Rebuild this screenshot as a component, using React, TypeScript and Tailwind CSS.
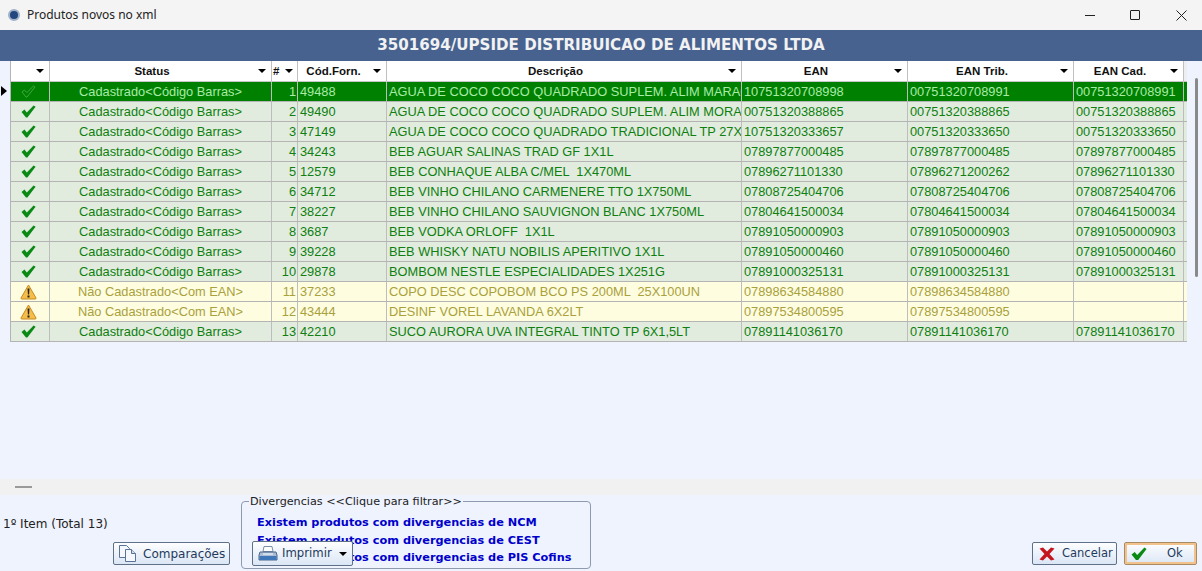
import React from 'react';

type Row = {
  status: string;
  num: number;
  cod: string;
  desc: string;
  ean: string;
  trib: string;
  cad: string;
  warn?: boolean;
};

const CAD = 'Cadastrado<Código Barras>';
const NAO = 'Não Cadastrado<Com EAN>';

const rows: Row[] = [
  { status: CAD, num: 1, cod: '49488', desc: 'AGUA DE COCO COCO QUADRADO SUPLEM. ALIM MARACUJA', ean: '10751320708998', trib: '00751320708991', cad: '00751320708991' },
  { status: CAD, num: 2, cod: '49490', desc: 'AGUA DE COCO COCO QUADRADO SUPLEM. ALIM MORANGO', ean: '00751320388865', trib: '00751320388865', cad: '00751320388865' },
  { status: CAD, num: 3, cod: '47149', desc: 'AGUA DE COCO COCO QUADRADO TRADICIONAL TP 27X200ML', ean: '10751320333657', trib: '00751320333650', cad: '00751320333650' },
  { status: CAD, num: 4, cod: '34243', desc: 'BEB AGUAR SALINAS TRAD GF 1X1L', ean: '07897877000485', trib: '07897877000485', cad: '07897877000485' },
  { status: CAD, num: 5, cod: '12579', desc: 'BEB CONHAQUE ALBA C/MEL  1X470ML', ean: '07896271101330', trib: '07896271200262', cad: '07896271101330' },
  { status: CAD, num: 6, cod: '34712', desc: 'BEB VINHO CHILANO CARMENERE TTO 1X750ML', ean: '07808725404706', trib: '07808725404706', cad: '07808725404706' },
  { status: CAD, num: 7, cod: '38227', desc: 'BEB VINHO CHILANO SAUVIGNON BLANC 1X750ML', ean: '07804641500034', trib: '07804641500034', cad: '07804641500034' },
  { status: CAD, num: 8, cod: '3687', desc: 'BEB VODKA ORLOFF  1X1L', ean: '07891050000903', trib: '07891050000903', cad: '07891050000903' },
  { status: CAD, num: 9, cod: '39228', desc: 'BEB WHISKY NATU NOBILIS APERITIVO 1X1L', ean: '07891050000460', trib: '07891050000460', cad: '07891050000460' },
  { status: CAD, num: 10, cod: '29878', desc: 'BOMBOM NESTLE ESPECIALIDADES 1X251G', ean: '07891000325131', trib: '07891000325131', cad: '07891000325131' },
  { status: NAO, num: 11, cod: '37233', desc: 'COPO DESC COPOBOM BCO PS 200ML  25X100UN', ean: '07898634584880', trib: '07898634584880', cad: '', warn: true },
  { status: NAO, num: 12, cod: '43444', desc: 'DESINF VOREL LAVANDA 6X2LT', ean: '07897534800595', trib: '07897534800595', cad: '', warn: true },
  { status: CAD, num: 13, cod: '42210', desc: 'SUCO AURORA UVA INTEGRAL TINTO TP 6X1,5LT', ean: '07891141036170', trib: '07891141036170', cad: '07891141036170' },
];

const cols = 'grid grid-cols-[39px_222px_26px_89px_355px_166px_166px_110px_3px]';

const Caret = ({ right }: { right: string }) => (
  <span className={`absolute top-[8px] h-0 w-0 border-x-[4px] border-t-[4px] border-x-transparent border-t-black ${right}`} />
);

const HeadCell = ({ label }: { label?: string }) => (
  <div className="relative flex items-center justify-center border-r border-[#c0c0c0] pr-[17px] pt-px text-[11.5px] font-bold text-[#111]">
    {label}
    <Caret right="right-[5px]" />
  </div>
);

const CheckMark = ({ selected, size = 15 }: { selected?: boolean; size?: number }) => (
  <svg width={size} height={size * 0.87} viewBox="0 0 15 13">
    {selected ? (
      <path d="M1 7 L3.5 5 L5.8 7.6 L12.5 1 L14 2 L6 12 L5 12 Z" fill="none" stroke="#3fa83f" strokeWidth="1" />
    ) : (
      <path d="M0.5 7 L3.5 4.6 L5.8 7.4 L12.6 0.5 L14.6 1.8 L6.4 12.6 L5 12.6 Z" fill="#0a8a14" />
    )}
  </svg>
);

const WarnIcon = () => (
  <svg width="17" height="16" viewBox="0 0 17 16">
    <path d="M8.5 1 L16 14 Q16.3 15 15 15 L2 15 Q0.7 15 1 14 Z" fill="#f5be4a" stroke="#c98a22" strokeWidth="1" />
    <path d="M7.5 4.5h2l-.4 6h-1.2z" fill="#222" />
    <rect x="7.5" y="11.5" width="2" height="2" fill="#222" />
  </svg>
);

const GridRow = ({ row, selected }: { row: Row; selected: boolean }) => {
  const tone = selected ? 'bg-[#008000] text-[#a8eca8]' : row.warn ? 'bg-[#fffde0] text-[#a9a13c]' : 'bg-[#e1ecdf] text-[#0f7f0f]';
  const cell = 'flex items-center overflow-hidden whitespace-pre border-r border-[#bdbdbd] pl-[2px]';
  return (
    <div className={`${cols} h-[20px] border-b border-[#b4b4b4] text-[12.8px] ${tone}`}>
      <div className="flex items-center justify-center border-r border-[#bdbdbd] pr-[3px]">
        {row.warn ? <WarnIcon /> : <CheckMark selected={selected} />}
      </div>
      <div className="flex items-center justify-center border-r border-[#bdbdbd]">{row.status}</div>
      <div className="flex items-center justify-end border-r border-[#bdbdbd] pr-[1px]">{row.num}</div>
      <div className={cell}>{row.cod}</div>
      <div className={cell}>{row.desc}</div>
      <div className={cell}>{row.ean}</div>
      <div className={cell}>{row.trib}</div>
      <div className={cell}>{row.cad}</div>
      <div />
    </div>
  );
};

const CopyIcon = () => (
  <svg width="20" height="19" viewBox="0 0 20 19" fill="#f4f7fb" stroke="#5a7396" strokeWidth="1">
    <path d="M1.5 1.5h7l3 3v9h-10z" />
    <path d="M7.5 5.5h6l4 4v8h-10z" />
    <path d="M13.5 5.5v4h4" fill="#cfdcec" />
  </svg>
);

const PrinterIcon = () => (
  <svg width="20" height="18" viewBox="0 0 20 18">
    <path d="M6 1.5h8l1 5H5z" fill="#fff" stroke="#7a8ea8" />
    <path d="M2 7h16l1 3v5H1v-5z" fill="#a9bcd4" stroke="#4a6489" />
    <path d="M1.5 11h17v4h-17z" fill="#3f77b8" />
    <path d="M5 9h10" stroke="#eef3fa" strokeWidth="1.2" />
  </svg>
);

const CancelIcon = () => (
  <svg width="16" height="14" viewBox="0 0 16 14">
    <path d="M0.5 1.5 L4 0.5 L8 4.5 L12 0.5 L15.5 1.5 L10.5 7 L15.5 12.5 L12 13.5 L8 9.5 L4 13.5 L0.5 12.5 L5.5 7 Z" fill="#c4161c" />
  </svg>
);

const ToolButton = ({ className, children }: { className: string; children: React.ReactNode }) => (
  <button className={`flex h-[23px] items-center rounded-[2px] border bg-gradient-to-b from-[#fdfeff] to-[#dbe6f5] text-[#1f3a5c] ${className}`}>
    {children}
  </button>
);

export default function App() {
  return (
    <div className="flex h-[571px] w-[1202px] flex-col overflow-hidden bg-[#eef3fe] font-['Tahoma','DejaVu_Sans',sans-serif]">
      {/* Title bar */}
      <div className="flex h-[30px] items-center justify-between bg-[#f4f4f4] pl-[8px]">
        <div className="flex items-center gap-[7px] font-['Noto_Sans',sans-serif] text-[12px] text-[#222]">
          <span className="h-[12px] w-[12px] rounded-full border-2 border-[#9fb0c8] bg-[#24467e]" />
          Produtos novos no xml
        </div>
        <div className="flex items-center pr-[15px]">
          <span className="h-px w-[10px] bg-[#222]" />
          <span className="ml-[35px] h-[10px] w-[10px] rounded-[1px] border border-[#222]" />
          <svg className="ml-[36px]" width="11" height="11" viewBox="0 0 11 11" stroke="#222" strokeWidth="1">
            <path d="M0.5 0.5 L10.5 10.5 M10.5 0.5 L0.5 10.5" />
          </svg>
        </div>
      </div>

      {/* Heading */}
      <div className="flex h-[31px] items-center justify-center bg-[#48628f] font-['DejaVu_Sans',sans-serif] text-[15.1px] font-bold text-[#f2f2f2]">
        3501694/UPSIDE DISTRIBUICAO DE ALIMENTOS LTDA
      </div>

      {/* Grid */}
      <div className="flex flex-1">
        <div className="flex w-[10px] flex-col pl-[1px]">
          <div className="h-[21px]" />
          <div className="mt-[4px] h-0 w-0 border-y-[5px] border-l-[6px] border-y-transparent border-l-black" />
        </div>
        <div className="h-fit border-l border-[#b4b4b4] font-['Liberation_Sans',sans-serif]">
          <div className={`${cols} h-[21px] border-b border-[#c8c8c8] bg-white`}>
            <HeadCell />
            <HeadCell label="Status" />
            <div className="relative flex items-center border-r border-[#c0c0c0] pl-[1px] pt-px text-[11.5px] font-bold text-[#111]">
              #
              <Caret right="right-[4px]" />
            </div>
            <HeadCell label="Cód.Forn." />
            <HeadCell label="Descrição" />
            <HeadCell label="EAN" />
            <HeadCell label="EAN Trib." />
            <HeadCell label="EAN Cad." />
            <div className="bg-[#eceef2]" />
          </div>
          {rows.map((row, i) => (
            <GridRow key={row.num} row={row} selected={i === 0} />
          ))}
        </div>
        <div className="ml-auto mr-[4px] mt-[17px] h-[199px] w-[3px] rounded-full bg-[#8a8a8a]" />
      </div>

      {/* Splitter */}
      <div className="flex h-[16px] items-center bg-[#f1f1f1] pl-[15px]">
        <div className="h-[2px] w-[17px] bg-[#9a9a9a]" />
      </div>

      {/* Footer */}
      <div className="relative flex h-[76px] justify-between pl-[3px] pr-[5px] text-[12px] text-[#222]">
        <div className="flex w-[227px] flex-col items-end">
          <div className="mt-[20px] self-start">1º Item (Total 13)</div>
          <ToolButton className="mt-[9px] w-[117px] gap-[5px] border-[#5f7089] pl-[4px]">
            <CopyIcon />
            Comparações
          </ToolButton>
        </div>
        <fieldset className="ml-[11px] mr-auto h-[74px] w-[350px] rounded-[4px] border border-[#8d9ab0] pl-[15px]">
          <legend className="-ml-[8px] px-[1px] text-[11.2px] leading-[13px] text-[#222]">Divergencias &lt;&lt;Clique para filtrar&gt;&gt;</legend>
          <div className="mt-[6px] whitespace-nowrap text-[11.3px] font-bold leading-[17.5px] text-[#0000cc]">
            <div>Existem produtos com divergencias de NCM</div>
            <div>Existem produtos com divergencias de CEST</div>
            <div>Existem produtos com divergencias de PIS Cofins</div>
          </div>
        </fieldset>
        <ToolButton className="absolute left-[252px] top-[46px] h-[25px] w-[101px] gap-[4px] border-[#5f7089] pl-[5px] text-[11.7px]">
          <PrinterIcon />
          Imprimir
          <span className="ml-[3px] h-0 w-0 border-x-[4px] border-t-[4px] border-x-transparent border-t-black" />
        </ToolButton>
        <div className="mt-[47px] flex gap-[7px] text-[11.5px]">
          <ToolButton className="w-[85px] gap-[7px] border-[#5f7089] pl-[6px]">
            <CancelIcon />
            Cancelar
          </ToolButton>
          <ToolButton className="w-[73px] gap-[20px] border-[#a88a63] pl-[6px] shadow-[inset_0_0_0_2px_#f2c28d]">
            <CheckMark size={16} />
            Ok
          </ToolButton>
        </div>
      </div>
    </div>
  );
}
